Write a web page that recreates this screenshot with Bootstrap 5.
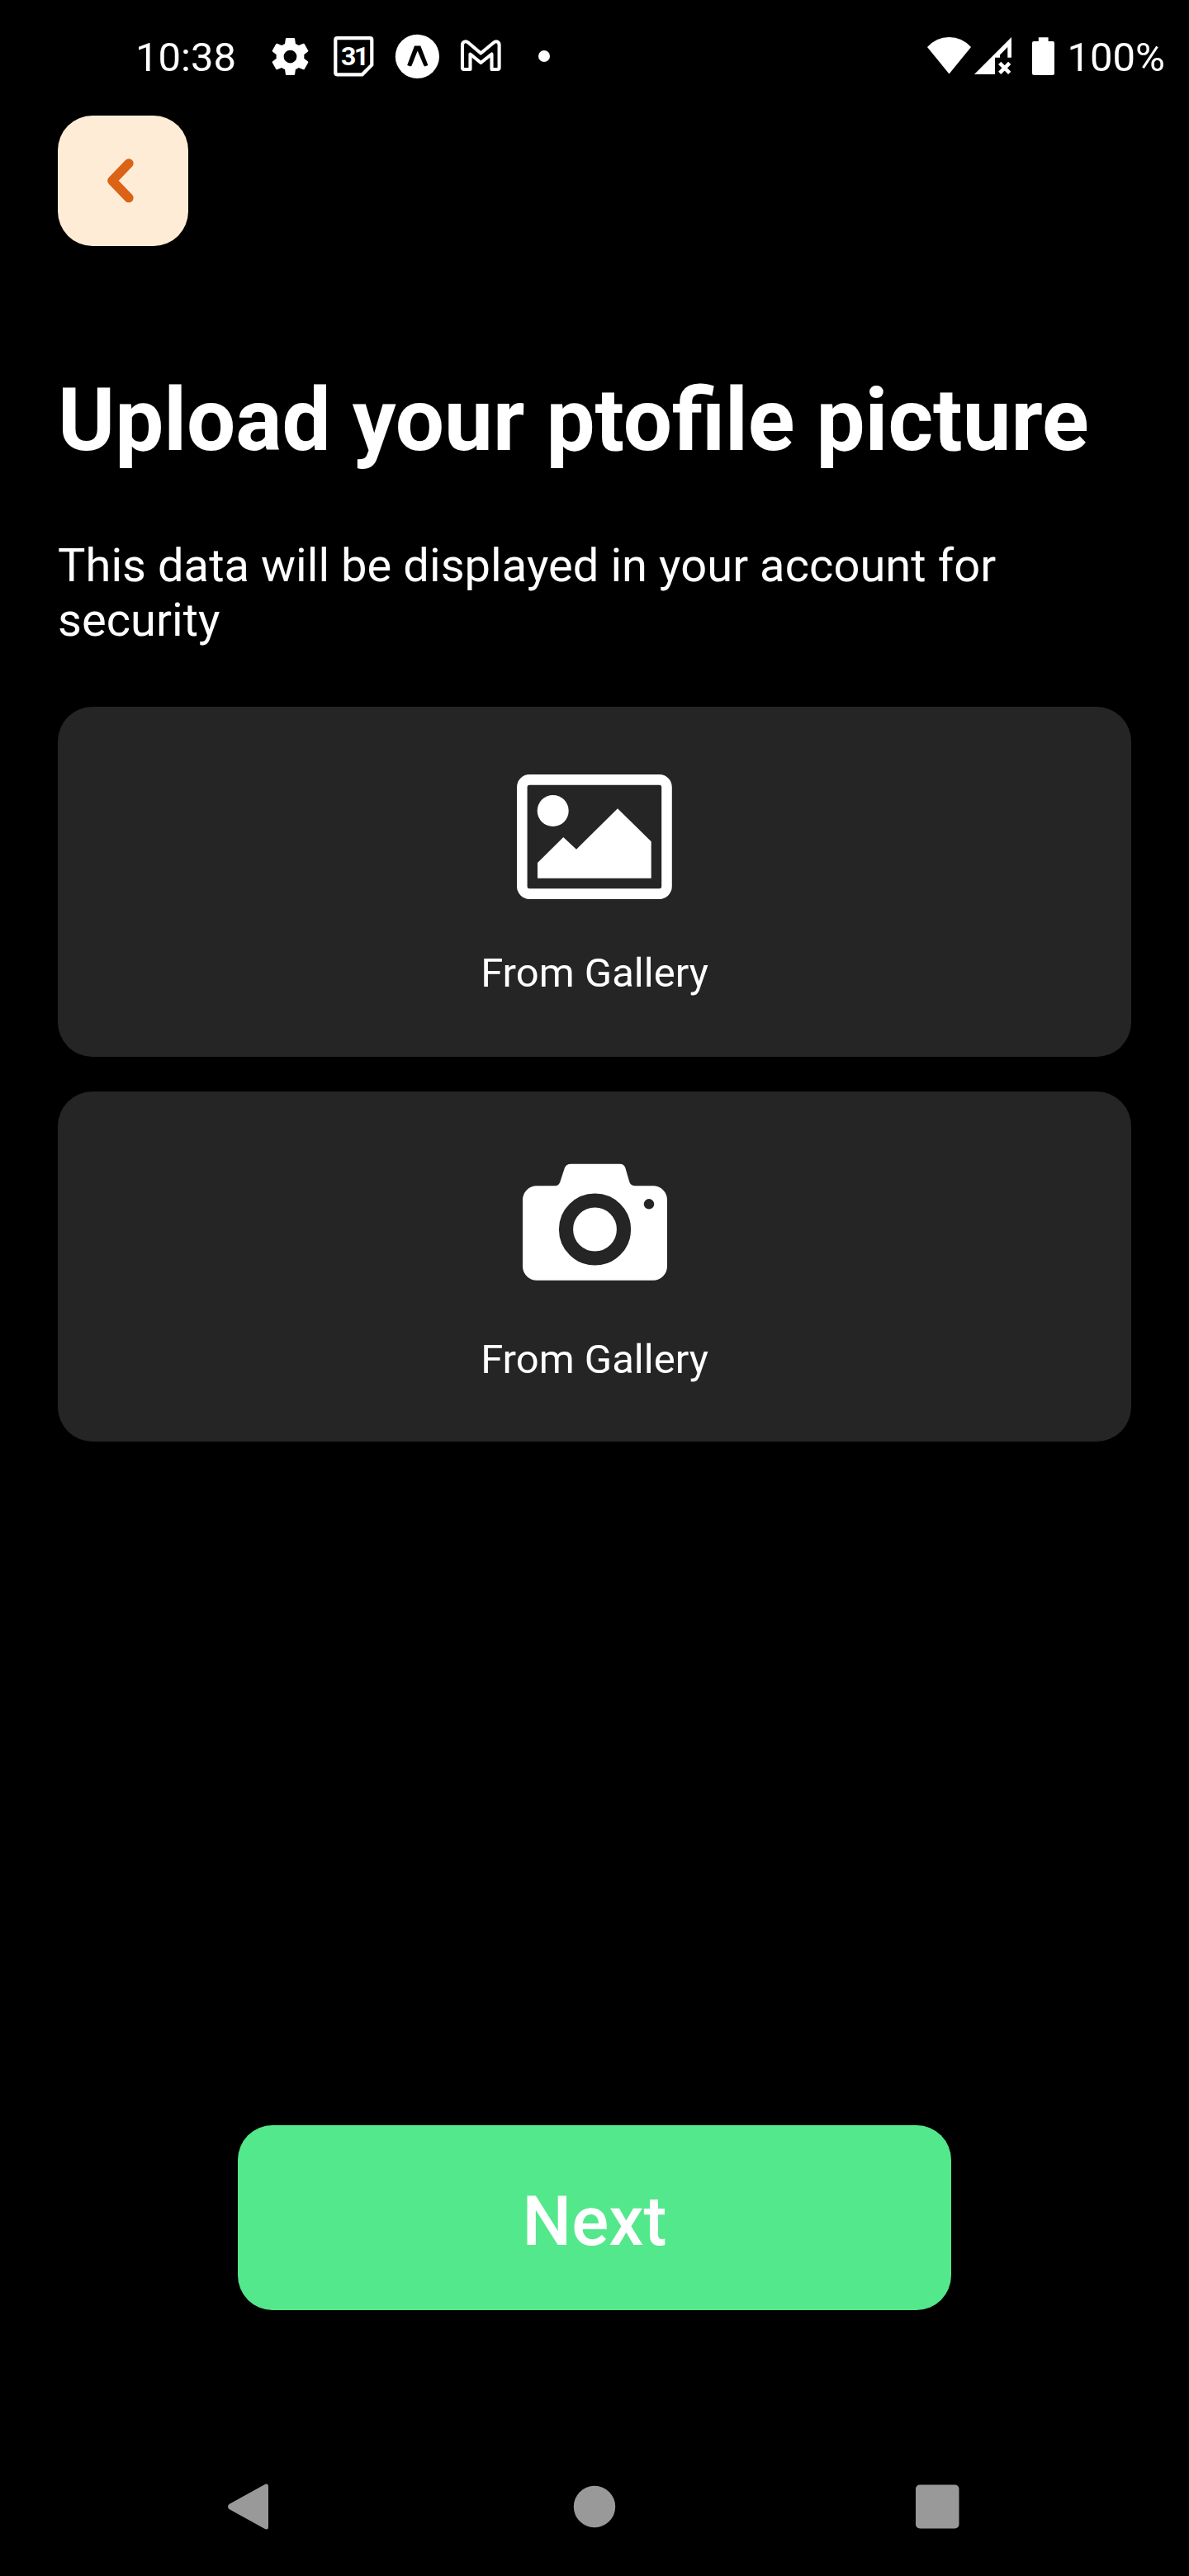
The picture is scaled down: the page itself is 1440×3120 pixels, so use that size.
<!DOCTYPE html>
<html lang="en">
<head>
<meta charset="utf-8">
<meta name="viewport" content="width=device-width, initial-scale=1">
<title>Upload your picture</title>
<link href="https://cdn.jsdelivr.net/npm/bootstrap@5.3.0/dist/css/bootstrap.min.css" rel="stylesheet">
<style>
  body { font-family: Roboto, "Liberation Sans", sans-serif; background: #000; color: #fff; }
  svg { display: block; flex: none; }
  .screen { width: 1440px; height: 3120px; overflow: hidden; }
  .status { height: 140px; padding: 0 29px 0 164px; font-size: 49px; line-height: 58px; }
  .status-text { padding-top: 41px; }
  .clock { width: 156px; }
  .content { padding: 0 70px; }
  .btn-back { width: 158px; height: 158px; border-radius: 42px; background: #ffecd6; border: 0; padding: 0; }
  .btn-back:hover { background: #ffecd6; }
  .title { font-size: 105px; line-height: 124px; font-weight: 700; margin: 150px 0 0; white-space: nowrap; }
  .subtitle { font-size: 56px; line-height: 66px; letter-spacing: .06px; margin: 80px 0 0; }
  .options { margin-top: 72px; gap: 42px; }
  .option { height: 424px; border: 0; border-radius: 42px; background: #252525; color: #fff; font-size: 49px; line-height: 58px; padding: 82px 0 0; gap: 61px; }
  .option + .option { gap: 63px; }
  .btn-next { width: 864px; height: 224px; border: 0; border-radius: 42px; background: #53e88b; color: #fff; font-size: 84px; font-weight: 500; line-height: 98px; padding: 9px 0 0; margin-bottom: 154px; }
  .btn-next:hover { background: #53e88b; color: #fff; }
  .navkeys { height: 168px; padding: 0 275px; }
</style>
</head>
<body>
<div class="screen d-flex flex-column">
  <header class="status d-flex align-items-start">
    <span class="status-text clock">10:38</span>
    <svg width="350" height="140" viewBox="320 0 350 140" fill="#fff">
      <!-- settings -->
      <path transform="translate(324.5 41.5) scale(2.25)" d="M19.43 12.98c.04-.32.07-.64.07-.98s-.03-.66-.07-.98l2.11-1.65c.19-.15.24-.42.12-.64l-2-3.46c-.12-.22-.39-.3-.61-.22l-2.49 1c-.52-.4-1.08-.73-1.69-.98l-.38-2.65C14.46 2.180 14.250 2 14 2h-4c-.25 0-.46.18-.49.42l-.38 2.650c-.61.25-1.170.59-1.690.98l-2.490-1c-.23-.09-.49 0-.61.22l-2 3.460c-.13.22-.07.49.12.64l2.110 1.650c-.04.32-.07.65-.07.98s.03.66.07.98l-2.110 1.650c-.19.15-.24.42-.12.64l2 3.460c.12.22.39.3.61.22l2.490-1c.52.4 1.080.73 1.690.98l.38 2.650c.03.24.24.42.49.42h4c.25 0 .46-.18.49-.42l.38-2.650c.61-.25 1.170-.59 1.690-.98l2.490 1c.23.09.49 0 .61-.22l2-3.460c.12-.22.07-.49-.12-.64l-2.110-1.650zM12 15.500a3.500 3.500 0 1 1 0-7 3.500 3.500 0 0 1 0 7z"/>
      <!-- calendar -->
      <path d="M408.300 46.200H448.300Q450.300 46.200 450.300 48.200V78.700L438.700 90.300H408.300Q406.300 90.300 406.300 88.300V48.200Q406.300 46.200 408.300 46.200Z" fill="none" stroke="#fff" stroke-width="4.200"/>
      <text x="413" y="79" font-size="32" font-weight="700" letter-spacing="-2.500" font-family="Roboto">31</text>
      <!-- expo -->
      <circle cx="505.400" cy="68.400" r="26.600"/>
      <path d="M502 55.500H509.300L518.400 79L514.700 80.500L513.300 79.600L505.700 61.500L498.600 79.600L497 80.500L493.200 79Z" fill="#000"/>
      <!-- mail -->
      <path d="M562 84H569.500V65.500L582.300 76L595.500 65.500V84H602.500Q604.600 84 604.600 82V54.500C604.600 50.500 601 49 598 51.500L582.300 64.500L567 51.500C564 49 560 50.500 560 54.500V82Q560 84 562 84Z" fill="none" stroke="#fff" stroke-width="4.100" stroke-linejoin="round"/>
      <circle cx="659" cy="68" r="7"/>
    </svg>
    <svg class="ms-auto" width="173" height="140" viewBox="1120 0 173 140" fill="#fff">
      <path d="M1150.500 89.500L1124 57Q1135 45 1150.500 45T1177 57Z"/>
      <path d="M1181 90L1226 45V69.700H1221.300V57L1212 66.500V69.700H1206V90Z"/>
      <path d="M1211.700 76.300L1223.700 88.300M1223.700 76.300L1211.700 88.300" stroke="#fff" stroke-width="4.600"/>
      <path d="M1258.800 45.300H1270.600V50H1276Q1278 50 1278 52V88.500Q1278 91 1275.500 91H1253.500Q1251 91 1251 88.500V52Q1251 50 1253 50H1258.800Z"/>
    </svg>
    <span class="status-text">100%</span>
  </header>

  <main class="content d-flex flex-column flex-grow-1">
    <button type="button" class="btn btn-back" aria-label="Back">
      <svg width="158" height="158" viewBox="70 140 158 158" fill="none" stroke="#da6317" stroke-width="11.300" stroke-linecap="round" stroke-linejoin="round">
        <path d="M156 197.800L135.800 218.800L156 239.700"/>
      </svg>
    </button>
    <h1 class="title">Upload your ptofile picture</h1>
    <p class="subtitle">This data will be displayed in your account for security</p>

    <div class="options d-flex flex-column">
      <div class="card option d-flex flex-column align-items-center">
        <svg width="188" height="151" viewBox="626 938 188 151" fill="#fff">
          <rect x="632.300" y="944.400" width="175.200" height="138.200" rx="9" fill="none" stroke="#fff" stroke-width="12.600"/>
          <circle cx="669.700" cy="982" r="19"/>
          <path d="M651 1045L682.300 1014L698 1028.700L748 979.300L788.700 1019.300V1063.700H651Z"/>
        </svg>
        <span>From Gallery</span>
      </div>
      <div class="card option d-flex flex-column align-items-center">
        <svg width="188" height="151" viewBox="626 1404 188 151" fill="#fff">
          <path d="M650 1436.300H672Q677 1436.300 678.500 1431L683.700 1415Q685.500 1409.700 691.700 1409.700H750.700Q756 1409.700 757.500 1415L762.300 1431.500Q764 1436.300 769.300 1436.300H791A17 17 0 0 1 808 1453.300V1533.700A17 17 0 0 1 791 1550.700H650A17 17 0 0 1 633 1533.700V1453.300A17 17 0 0 1 650 1436.300Z"/>
          <circle cx="720.500" cy="1489" r="35" fill="none" stroke="#252525" stroke-width="17.200"/>
          <circle cx="786" cy="1458.300" r="6.200" fill="#252525"/>
        </svg>
        <span>From Gallery</span>
      </div>
    </div>

    <button type="button" class="btn btn-next align-self-center mt-auto">Next</button>
  </main>

  <nav class="navkeys d-flex align-items-center justify-content-between">
    <svg width="60" height="60" viewBox="275 3006 60 60" fill="#999">
      <path d="M277.500 3033L320 3009.500Q325 3006.500 325 3012V3060Q325 3065.500 320 3062.500L277.500 3039Q274.500 3036 277.500 3033Z"/>
    </svg>
    <svg width="60" height="60" viewBox="690 3006 60 60" fill="#999"><circle cx="720" cy="3036" r="25.200"/></svg>
    <svg width="60" height="60" viewBox="1105 3006 60 60" fill="#999"><rect x="1109" y="3009.500" width="52.500" height="53" rx="5"/></svg>
  </nav>
</div>
<script src="https://cdn.jsdelivr.net/npm/bootstrap@5.3.0/dist/js/bootstrap.bundle.min.js"></script>
</body>
</html>
